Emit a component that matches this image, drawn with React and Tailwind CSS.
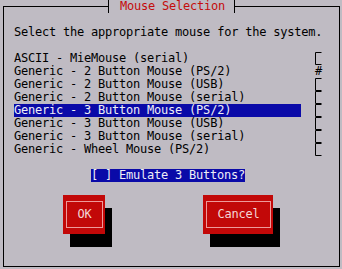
import React from "react";

const mice = [
  "ASCII - MieMouse (serial)",
  "Generic - 2 Button Mouse (PS/2)",
  "Generic - 2 Button Mouse (USB)",
  "Generic - 2 Button Mouse (serial)",
  "Generic - 3 Button Mouse (PS/2)",
  "Generic - 3 Button Mouse (USB)",
  "Generic - 3 Button Mouse (serial)",
  "Generic - Wheel Mouse (PS/2)",
];

const selected = 4;
const thumb = 1;

const TrackCell = () => (
  <svg width="7" height="13" viewBox="0 0 7 13" className="block">
    <path d="M6.5 0.5H0.5V12.5H6.5" fill="none" stroke="#000" strokeWidth="1" />
  </svg>
);

const Button = ({ label, width }) => (
  <div
    className={`${width} h-[39px] bg-[#c20808] pl-[3px] pr-[2px] py-[6px] shadow-[7px_13px_0_0_#000]`}
  >
    <div className="h-full border border-[#ee9a9a] flex items-center justify-center text-[#f3d6d6]">
      {label}
    </div>
  </div>
);

const App = () => {
  return (
    <div className="relative w-[342px] h-[269px] overflow-hidden bg-[#bfbbc3] font-['DejaVu_Sans_Mono',monospace] text-[12px] leading-[13px] tracking-[-0.22px] text-black">
      <div className="ml-[3px] mt-[6px] w-[337px] h-[261px] border border-black pt-[19px] pl-[10px]">
        <div className="h-[13px] whitespace-pre">
          Select the appropriate mouse for the system.
        </div>
        <div className="h-[13px]" />

        {mice.map((m, i) => (
          <div key={m} className="flex h-[13px]">
            <div
              className={`w-[287px] whitespace-pre ${
                i === selected ? "bg-[#0a0aa8] text-[#eeeef6]" : ""
              }`}
            >
              {m}
            </div>
            <div className="w-[14px]" />
            <div className="w-[7px] flex justify-center">
              {i === thumb ? <span>#</span> : <TrackCell />}
            </div>
          </div>
        ))}

        <div className="h-[13px]" />
        <div className="flex h-[13px] pl-[77px]">
          <div className="bg-[#0a0aa8] text-[#eeeef6] whitespace-pre">
            [ ] Emulate 3 Buttons?
          </div>
        </div>
        <div className="h-[13px]" />

        <div className="flex pl-[49px] gap-[98px]">
          <Button label="OK" width="w-[42px]" />
          <Button label="Cancel" width="w-[70px]" />
        </div>
      </div>

      <div className="absolute left-[108px] top-0 h-[13px] w-[127px] border-x border-black bg-[#bfbbc3] pl-[4px] whitespace-pre text-[#c40c0c]">
        {" Mouse Selection"}
      </div>
    </div>
  );
};

export default App;
